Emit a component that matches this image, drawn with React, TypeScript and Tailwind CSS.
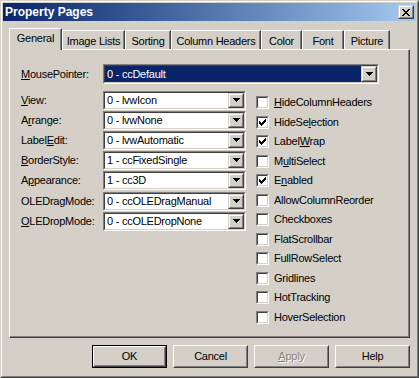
import React from "react";

const Check = () => (
  <svg width="7" height="7" viewBox="0 0 7 7" shapeRendering="crispEdges" className="block">
    <rect x="6" y="0" width="1" height="1" fill="#000" />
    <rect x="5" y="1" width="2" height="1" fill="#000" />
    <rect x="0" y="2" width="1" height="1" fill="#000" />
    <rect x="4" y="2" width="3" height="1" fill="#000" />
    <rect x="0" y="3" width="2" height="1" fill="#000" />
    <rect x="3" y="3" width="3" height="1" fill="#000" />
    <rect x="0" y="4" width="5" height="1" fill="#000" />
    <rect x="1" y="5" width="3" height="1" fill="#000" />
    <rect x="2" y="6" width="1" height="1" fill="#000" />
  </svg>
);

const Arrow = () => (
  <svg width="7" height="4" viewBox="0 0 7 4" shapeRendering="crispEdges" className="block">
    <rect x="0" y="0" width="7" height="1" fill="#000" />
    <rect x="1" y="1" width="5" height="1" fill="#000" />
    <rect x="2" y="2" width="3" height="1" fill="#000" />
    <rect x="3" y="3" width="1" height="1" fill="#000" />
  </svg>
);

const CloseX = () => (
  <svg width="8" height="7" viewBox="0 0 8 7" shapeRendering="crispEdges" className="block">
    <rect x="0" y="0" width="2" height="1" fill="#000" />
    <rect x="6" y="0" width="2" height="1" fill="#000" />
    <rect x="1" y="1" width="2" height="1" fill="#000" />
    <rect x="5" y="1" width="2" height="1" fill="#000" />
    <rect x="2" y="2" width="4" height="1" fill="#000" />
    <rect x="3" y="3" width="2" height="1" fill="#000" />
    <rect x="2" y="4" width="4" height="1" fill="#000" />
    <rect x="1" y="5" width="2" height="1" fill="#000" />
    <rect x="5" y="5" width="2" height="1" fill="#000" />
    <rect x="0" y="6" width="2" height="1" fill="#000" />
    <rect x="6" y="6" width="2" height="1" fill="#000" />
  </svg>
);

const U = ({ children }: { children: React.ReactNode }) => (
  <span className="underline underline-offset-[1px] decoration-[1px]">{children}</span>
);

function DropBtn() {
  return (
    <div className="w-[16px] h-full border border-t-[#d4d0c8] border-l-[#d4d0c8] border-r-[#404040] border-b-[#404040] bg-[#d4d0c8]">
      <div className="w-full h-full border border-t-white border-l-white border-r-[#808080] border-b-[#808080] flex items-center justify-center">
        <Arrow />
      </div>
    </div>
  );
}

function Combo({ text, w, sel, h }: { text: string; w: string; sel?: boolean; h: string }) {
  return (
    <div className={`${w} ${h} border border-t-[#808080] border-l-[#808080] border-r-white border-b-white`}>
      <div className="h-full border border-t-[#404040] border-l-[#404040] border-r-[#d4d0c8] border-b-[#d4d0c8] bg-white flex">
        <div
          className={`flex-1 flex items-center pl-[2px] whitespace-nowrap overflow-hidden ${
            sel ? "bg-[#0a246a] text-white" : "text-black"
          }`}
        >
          {text}
        </div>
        <DropBtn />
      </div>
    </div>
  );
}

function CheckBox({ label, checked }: { label: React.ReactNode; checked?: boolean }) {
  return (
    <div className="h-[19.5px] flex items-center">
      <div className="w-[13px] h-[13px] border border-t-[#808080] border-l-[#808080] border-r-white border-b-white">
        <div className="w-full h-full border border-t-[#404040] border-l-[#404040] border-r-[#d4d0c8] border-b-[#d4d0c8] bg-white flex items-center justify-center">
          {checked ? <Check /> : null}
        </div>
      </div>
      <div className="ml-[5px] whitespace-nowrap">{label}</div>
    </div>
  );
}

const tabs: { label: string; w: string; sel?: boolean }[] = [
  { label: "General", w: "w-[53px]", sel: true },
  { label: "Image Lists", w: "w-[63px]" },
  { label: "Sorting", w: "w-[46px]" },
  { label: "Column Headers", w: "w-[90px]" },
  { label: "Color", w: "w-[41px]" },
  { label: "Font", w: "w-[42px]" },
  { label: "Picture", w: "w-[46px]" },
];

const rows: { label: React.ReactNode; value: string; gap?: boolean }[] = [
  { label: <><U>V</U>iew:</>, value: "0 - lvwIcon" },
  { label: <>A<U>r</U>range:</>, value: "0 - lvwNone" },
  { label: <>Label<U>E</U>dit:</>, value: "0 - lvwAutomatic" },
  { label: <><U>B</U>orderStyle:</>, value: "1 - ccFixedSingle" },
  { label: <>A<U>p</U>pearance:</>, value: "1 - cc3D" },
  { label: <>OLEDragMode:</>, value: "0 - ccOLEDragManual", gap: true },
  { label: <><U>O</U>LEDropMode:</>, value: "0 - ccOLEDropNone" },
];

const checks: { label: React.ReactNode; checked?: boolean }[] = [
  { label: <><U>H</U>ideColumnHeaders</> },
  { label: <>HideSe<U>l</U>ection</>, checked: true },
  { label: <>Label<U>W</U>rap</>, checked: true },
  { label: <>M<U>u</U>ltiSelect</> },
  { label: <>E<U>n</U>abled</>, checked: true },
  { label: "AllowColumnReorder" },
  { label: "Checkboxes" },
  { label: "FlatScrollbar" },
  { label: "FullRowSelect" },
  { label: "Gridlines" },
  { label: "HotTracking" },
  { label: "HoverSelection" },
];

function Button({ children, def, disabled }: { children: React.ReactNode; def?: boolean; disabled?: boolean }) {
  if (def) {
    return (
      <div className="w-[75px] h-[23px] border border-black">
        <div className="w-full h-full border border-t-white border-l-white border-r-[#404040] border-b-[#404040]">
          <div className="w-full h-full border border-t-[#d4d0c8] border-l-[#d4d0c8] border-r-[#808080] border-b-[#808080] flex items-center justify-center">
            {children}
          </div>
        </div>
      </div>
    );
  }
  return (
    <div className="w-[75px] h-[23px] border border-t-white border-l-white border-r-[#404040] border-b-[#404040]">
      <div
        className={`w-full h-full border border-t-[#d4d0c8] border-l-[#d4d0c8] border-r-[#808080] border-b-[#808080] flex items-center justify-center ${
          disabled ? "text-[#808080] [text-shadow:1px_1px_0_#ffffff]" : ""
        }`}
      >
        {children}
      </div>
    </div>
  );
}

export default function App() {
  return (
    <div className="w-[419px] h-[378px] bg-[#d4d0c8] border border-t-[#d4d0c8] border-l-[#d4d0c8] border-r-[#404040] border-b-[#404040] font-['Liberation_Sans',Arial,sans-serif] text-[11px] tracking-[-0.25px] leading-none text-black">
      <div className="w-full h-full border border-t-white border-l-white border-r-[#808080] border-b-[#808080] p-px flex flex-col">
        {/* Title bar */}
        <div className="h-[18px] flex items-center bg-gradient-to-r from-[#0a246a] to-[#a6caf0]">
          <div className="pl-[2px] text-white font-bold text-[12px] tracking-normal">Property Pages</div>
          <div className="ml-auto mr-[2px] w-[16px] h-[14px] border border-t-[#d4d0c8] border-l-[#d4d0c8] border-r-[#404040] border-b-[#404040] bg-[#d4d0c8]">
            <div className="w-full h-full border border-t-white border-l-white border-r-[#808080] border-b-[#808080] flex items-center justify-center">
              <CloseX />
            </div>
          </div>
        </div>

        {/* Tabs */}
        <div className="mt-[7px] ml-[6px] h-[21px] flex items-end">
          {tabs.map((t) =>
            t.sel ? (
              <div
                key={t.label}
                className={`${t.w} h-[22px] -mb-px relative z-10 bg-[#d4d0c8] border-l border-t border-r border-l-white border-t-white border-r-[#404040] shadow-[inset_-1px_0_0_#808080] flex items-center justify-center pb-[2px]`}
              >
                {t.label}
              </div>
            ) : (
              <div
                key={t.label}
                className={`${t.w} h-[19px] bg-[#d4d0c8] border-l border-t border-r border-l-white border-t-white border-r-[#404040] shadow-[inset_-1px_0_0_#808080] flex items-center justify-center pt-[2px] whitespace-nowrap`}
              >
                {t.label}
              </div>
            )
          )}
        </div>

        {/* Panel */}
        <div className="ml-[6px] w-[401px] h-[289px] border border-l-white border-t-white border-r-[#404040] border-b-[#404040] shadow-[inset_-1px_-1px_0_#808080] pl-[11px] pt-[14px]">
          <div className="h-[20px] flex items-center">
            <div className="w-[82px]">
              <U>M</U>ousePointer:
            </div>
            <Combo text="0 - ccDefault" w="w-[276px]" h="h-[20px]" sel />
          </div>
          <div className="mt-[6px] flex">
            <div className="w-[225px] flex flex-col">
              {rows.map((r, i) => (
                <div key={i} className={`h-[20px] flex items-center ${r.gap ? "mt-px" : ""}`}>
                  <div className="w-[82px] whitespace-nowrap">{r.label}</div>
                  <Combo text={r.value} w="w-[143px]" h="h-[19px]" />
                </div>
              ))}
            </div>
            <div className="ml-[10px] mt-[3px] flex flex-col">
              {checks.map((c, i) => (
                <CheckBox key={i} label={c.label} checked={c.checked} />
              ))}
            </div>
          </div>
        </div>

        {/* Buttons */}
        <div className="mt-[7px] ml-[6px] w-[401px] flex justify-end gap-[6px]">
          <Button def>OK</Button>
          <Button>Cancel</Button>
          <Button disabled>
            <U>A</U>pply
          </Button>
          <Button>Help</Button>
        </div>
      </div>
    </div>
  );
}
